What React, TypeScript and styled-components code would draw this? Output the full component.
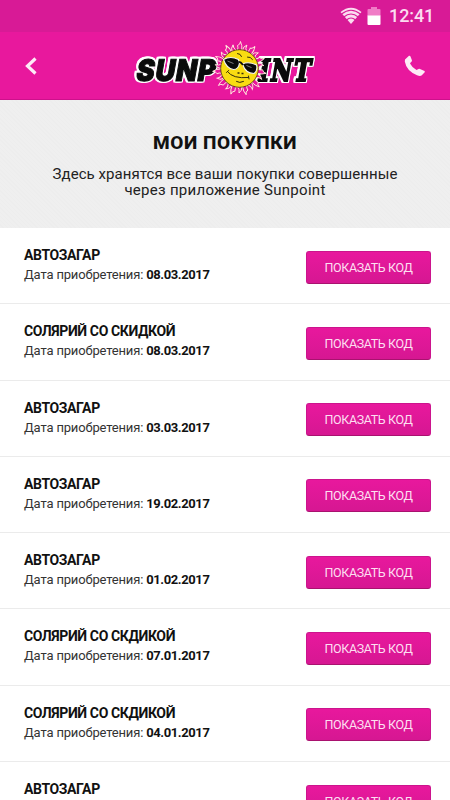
import React from "react";
import styled, { createGlobalStyle } from "styled-components";

const GlobalStyle = createGlobalStyle`
  * { box-sizing: border-box; }
  html, body { margin: 0; padding: 0; }
  body { background: #fff; overflow: hidden; font-family: Roboto, "Noto Sans", sans-serif; color: #111; }
`;

const Screen = styled.main`
  width: 450px;
  height: 800px;
  overflow: hidden;
  background: #fff;
  display: flex;
  flex-direction: column;
`;

const StatusBar = styled.div`
  flex: none;
  height: 32px;
  padding-right: 16px;
  display: flex;
  align-items: center;
  justify-content: flex-end;
  background: #d81a96;
  color: #fbdcf0;
`;

const Clock = styled.time`
  width: 45px;
  margin-left: 8px;
  font-size: 18px;
  line-height: 32px;
  font-weight: 500;
  letter-spacing: -0.1px;
  white-space: nowrap;
`;

const WifiIcon = styled.svg`
  width: 22px;
  height: 18px;
  margin-right: 5px;
`;

const BatteryIcon = styled.svg`
  width: 14px;
  height: 20px;
`;

const AppBar = styled.header`
  flex: none;
  height: 68px;
  padding: 0 24px;
  display: flex;
  align-items: center;
  justify-content: space-between;
  background: #e8189d;
  border-bottom: 1px solid #cd118b;
`;

const IconButton = styled.button`
  padding: 0;
  border: 0;
  background: none;
  display: flex;
  color: #fdeaf6;
`;

const Logo = styled.svg`
  width: 190px;
  height: 60px;
  margin-left: 4px;
  overflow: visible;
`;

const Intro = styled.section`
  flex: none;
  height: 128px;
  padding-top: 31px;
  text-align: center;
  background: repeating-linear-gradient(45deg, #efefef 0 2px, #ededed 2px 3px);
`;

const Heading = styled.h1`
  margin: 0;
  font-size: 19px;
  line-height: 24px;
  font-weight: 800;
  letter-spacing: 0.6px;
`;

const Lead = styled.p`
  margin: 11px 0 0;
  font-size: 15px;
  line-height: 16px;
  color: #222;
`;

const LeadLine = styled.span<{ $tracking: number }>`
  display: block;
  letter-spacing: ${({ $tracking }) => $tracking}px;
`;

const List = styled.ul`
  margin: 0;
  padding: 0;
  list-style: none;
`;

const Row = styled.li`
  height: 76.3px;
  padding: 0 19px 0 24px;
  display: flex;
  justify-content: space-between;
  border-bottom: 1px solid #ebebeb;
`;

const Details = styled.div`
  padding-top: 18px;
`;

const Name = styled.h2`
  margin: 0;
  font-size: 14px;
  line-height: 19px;
  font-weight: 700;
  letter-spacing: -0.38px;
`;

const Purchased = styled.p`
  margin: 0;
  font-size: 13px;
  line-height: 19px;
  letter-spacing: -0.16px;
  color: #333;
`;

const PurchaseDate = styled.time`
  font-weight: 700;
  letter-spacing: -0.4px;
  color: #111;
`;

const CodeButton = styled.button`
  flex: none;
  width: 125px;
  height: 33px;
  margin-top: 22.5px;
  padding: 0;
  border: 1px solid #cc148d;
  border-bottom-color: #a9126f;
  border-radius: 3px;
  background: linear-gradient(#e8189d, #d61792);
  color: #fddff1;
  font-family: inherit;
  font-size: 12.5px;
  letter-spacing: -0.4px;
  line-height: 31px;
  white-space: nowrap;
`;

const purchases = [
  { name: "АВТОЗАГАР", date: "08.03.2017" },
  { name: "СОЛЯРИЙ СО СКИДКОЙ", date: "08.03.2017" },
  { name: "АВТОЗАГАР", date: "03.03.2017" },
  { name: "АВТОЗАГАР", date: "19.02.2017" },
  { name: "АВТОЗАГАР", date: "01.02.2017" },
  { name: "СОЛЯРИЙ СО СКДИКОЙ", date: "07.01.2017" },
  { name: "СОЛЯРИЙ СО СКДИКОЙ", date: "04.01.2017" },
  { name: "АВТОЗАГАР", date: "" },
];

const rays = Array.from({ length: 22 }, (_, i) => i * (360 / 22));

const Wordmark = styled.text<{ $family: string; $tracking: number }>`
  font-family: ${({ $family }) => $family};
  font-weight: 900;
  font-size: 30px;
  letter-spacing: ${({ $tracking }) => $tracking}px;
`;

const WordOutline = styled.g`
  filter: drop-shadow(1.4px 0 0 #fff) drop-shadow(-1.4px 0 0 #fff)
    drop-shadow(0 1.4px 0 #fff) drop-shadow(0 -1.4px 0 #fff);
`;

type WordProps = {
  x: number;
  width: number;
  family: string;
  weight: number;
  tracking: number;
  children: string;
};

function Word({ x, width, family, weight, tracking, children }: WordProps) {
  return (
    <WordOutline>
      <g transform={`translate(${x} 45) skewX(-10)`}>
        <Wordmark
          $family={family}
          $tracking={tracking}
          fill="#0b0b0b"
          stroke="#0b0b0b"
          strokeWidth={weight}
          textLength={width}
          lengthAdjust="spacingAndGlyphs"
        >
          {children}
        </Wordmark>
      </g>
    </WordOutline>
  );
}

function SunpointLogo() {
  return (
    <Logo viewBox="0 0 190 60" role="img" aria-label="Sunpoint">
      <Word x={7} width={80} family="Inter, sans-serif" weight={1} tracking={0.8}>SUNP</Word>
      <Word x={129} width={54} family='"DejaVu Serif", serif' weight={2.2} tracking={2.5}>INT</Word>
      <g transform="translate(111.500 32.500)">
        {rays.map((angle, i) => (
          <path
            key={angle}
            d={i % 2 ? "M-2.2-18Q-3-22 .5-24.500Q-.5-21 2.2-18" : "M-2.2-18Q-1-21-2-23Q1-24 1-27Q3-23 2.2-18"}
            fill="#e8189d"
            stroke="#ffeede"
            strokeWidth=".9"
            transform={`rotate(${angle})`}
          />
        ))}
        <circle r="18.8" fill="#f9dc12" stroke="#4a3a10" strokeWidth=".8" />
        <path d="M-16-9Q-9-13-1-9L0-5.500Q-1 1-6 1Q-13 0-16-9Z" fill="#0b0b0b" stroke="#f3f3f3" strokeWidth="1.100" />
        <path d="M3-4.500Q9-7.500 17-3.500Q18.500 2 14.500 5Q6 5 3-4.500Z" fill="#0b0b0b" stroke="#f3f3f3" strokeWidth="1.100" />
        <path d="M-1-6.500Q1-7 3.500-3.500" fill="none" stroke="#0b0b0b" strokeWidth="1.800" />
        <path d="M-12-7.500L-6-5M7-3L12-1" stroke="#999" strokeWidth=".8" />
        <path d="M-12 3Q-7 10.500 9 9M9 7.500L9.500 10.500M-13 4L-11 2M-3 13Q0 15 4 13M-2-15Q1-15 2-12M8-11.500Q11-12 13-9" fill="none" stroke="#332b0b" strokeWidth="1" strokeLinecap="round" />
        <path d="M-2 4.500H0M2 5H4" stroke="#332b0b" strokeWidth="1.500" />
      </g>
    </Logo>
  );
}

export default function App() {
  return (
    <Screen>
      <GlobalStyle />
      <StatusBar>
        <WifiIcon viewBox="0 0 22 18" fill="none">
          <path d="M.5 5Q11-3.500 21.500 5L11 17Z" fill="currentColor" />
          <path d="M1.500 7Q11-.5 20.500 7M3.800 10Q11 4 18.200 10M6.500 13Q11 9 15.500 13" stroke="#d81a96" strokeWidth="1.100" />
        </WifiIcon>
        <BatteryIcon viewBox="0 0 14 20">
          <path d="M4 1h6v2h2.500q1 0 1 1v6H.5V4q0-1 1-1H4Z" fill="#f07cc6" />
          <path d="M.5 9.500h13V18q0 1-1 1h-11q-1 0-1-1Z" fill="#fff" />
        </BatteryIcon>
        <Clock>12:41</Clock>
      </StatusBar>
      <AppBar>
        <IconButton aria-label="Назад">
          <svg width="14" height="20" viewBox="0 0 14 20" fill="none">
            <path d="M11.500 2.500L3.500 10L11.500 17.500" stroke="currentColor" strokeWidth="3.200" />
          </svg>
        </IconButton>
        <SunpointLogo />
        <IconButton aria-label="Позвонить">
          <svg width="22" height="22" viewBox="0 0 22 22">
            <path d="M1 4.500L5 .8Q6 .5 6.500 1.500L8 5.500Q8 6.500 7 7L6 8.500Q8 12.500 12.500 15L14.500 14Q15 13.500 16 14L20.500 16Q21.200 16.700 20.500 17.500L17.500 20.500Q16 21.500 13 20.200Q2.500 16 .8 6.500Z" fill="currentColor" />
          </svg>
        </IconButton>
      </AppBar>
      <Intro>
        <Heading>МОИ ПОКУПКИ</Heading>
        <Lead>
          <LeadLine $tracking={0.06}>Здесь хранятся все ваши покупки совершенные</LeadLine>
          <LeadLine $tracking={0.28}>через приложение Sunpoint</LeadLine>
        </Lead>
      </Intro>
      <List>
        {purchases.map(({ name, date }, index) => (
          <Row key={index}>
            <Details>
              <Name>{name}</Name>
              {date && (
                <Purchased>
                  Дата приобретения: <PurchaseDate>{date}</PurchaseDate>
                </Purchased>
              )}
            </Details>
            <CodeButton>ПОКАЗАТЬ КОД</CodeButton>
          </Row>
        ))}
      </List>
    </Screen>
  );
}
